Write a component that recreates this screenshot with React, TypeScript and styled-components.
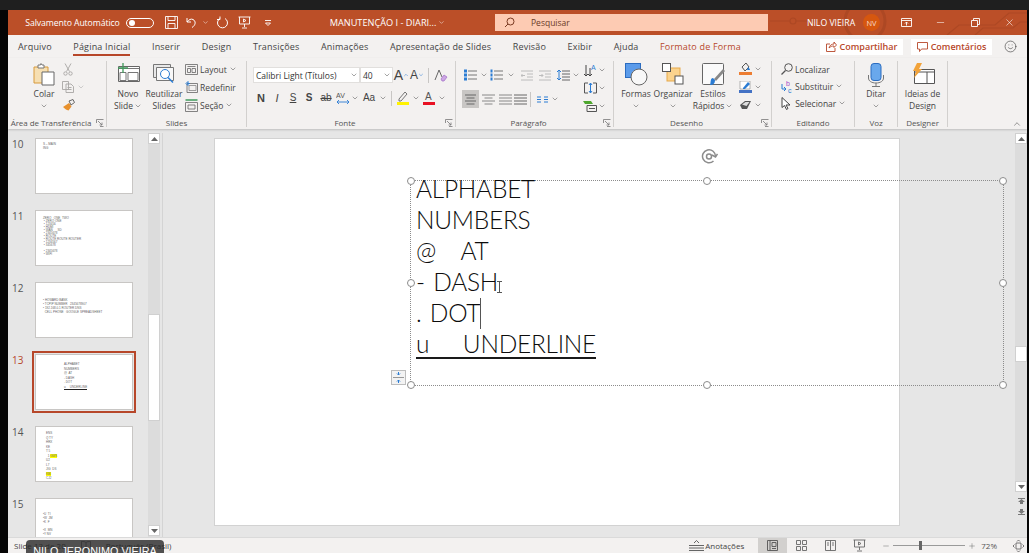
import React from 'react'
import styled, { createGlobalStyle } from 'styled-components'
import { ChevronDown, ChevronUp, Smile, Minus, X, Plus } from 'lucide-react'

const ACCENT = '#b7472a'
const UI_FONT = '"Open Sans", "Noto Sans", sans-serif'

const GlobalStyle = createGlobalStyle`
  html, body { margin: 0; padding: 0; background: #000; }
  * { box-sizing: border-box; }
  body { font-family: ${UI_FONT}; }
`

const Page = styled.div`
  position: relative;
  width: 1029px;
  height: 553px;
  overflow: hidden;
  background: #050505;
  display: flex;
  flex-direction: column;
`
const TopStrip = styled.div`
  height: 10px;
  flex: none;
  background: #1f1f1f;
`
const Win = styled.div`
  width: 1019px;
  margin-left: 8px;
  height: 543px;
  display: flex;
  flex-direction: column;
  background: #e6e6e6;
`

/* title bar */
const TitleBar = styled.div`
  position: relative;
  height: 25px;
  flex: none;
  background: #bb4f28;
  color: #fff;
  display: flex;
  align-items: center;
  overflow: hidden;
  font-size: 8.7px;
`
const Circuit = styled.svg`
  position: absolute;
  right: 0;
  top: 0;
`
const TitleSlot = styled.div<{ $w: number; $ml?: number; $fs?: number; $ls?: number }>`
  position: relative;
  width: ${p => p.$w}px;
  margin-left: ${p => p.$ml ?? 0}px;
  flex: none;
  display: flex;
  align-items: center;
  justify-content: center;
  white-space: nowrap;
  font-size: ${p => p.$fs ?? 8.7}px;
  letter-spacing: ${p => p.$ls ?? 0}px;
`
const Toggle = styled.div`
  width: 28px;
  height: 10px;
  border: 1px solid #fff;
  border-radius: 6px;
  display: flex;
  align-items: center;
  padding-left: 2px;
`
const ToggleKnob = styled.div`
  width: 6px;
  height: 6px;
  border-radius: 50%;
  background: #fff;
`
const SearchBox = styled.div`
  position: relative;
  width: 273px;
  height: 17px;
  margin-left: 50px;
  flex: none;
  background: #fdcbb3;
  color: #6b3a28;
  display: flex;
  align-items: center;
  gap: 16px;
  padding-left: 9px;
  font-size: 8.5px;
`
const Avatar = styled.div`
  width: 17px;
  height: 17px;
  border-radius: 50%;
  background: #d6570f;
  font-size: 7.5px;
  display: flex;
  align-items: center;
  justify-content: center;
  color: #f7d9c8;
`

/* tabs */
const TabRow = styled.div`
  height: 23px;
  flex: none;
  background: #f3f1f0;
  display: flex;
  align-items: center;
  padding-left: 10px;
  gap: 21.5px;
`
const Tab = styled.div<{ $active?: boolean; $accent?: boolean }>`
  position: relative;
  font-size: 9px;
  letter-spacing: 0.18px;
  color: ${p => (p.$accent ? ACCENT : '#444')};
  white-space: nowrap;
  ${p => p.$active && `
    &::after {
      content: '';
      position: absolute;
      left: 0;
      right: 0;
      bottom: -3px;
      height: 2px;
      background: ${ACCENT};
    }
  `}
`
const TabActions = styled.div`
  margin-left: auto;
  display: flex;
  align-items: center;
  gap: 8px;
  padding-right: 10px;
`
const ActionButton = styled.div<{ $w: number }>`
  width: ${p => p.$w}px;
  height: 16px;
  background: #fff;
  color: ${ACCENT};
  font-size: 9px;
  font-weight: 600;
  display: flex;
  align-items: center;
  justify-content: center;
  gap: 3px;
  white-space: nowrap;
`
const SmileSlot = styled.div`
  margin-left: 3px;
  width: 14px;
  height: 14px;
  display: flex;
  align-items: center;
  justify-content: center;
`

/* ribbon */
const Ribbon = styled.div`
  position: relative;
  height: 71px;
  flex: none;
  background: #f3f1f0;
  display: flex;
  padding-top: 3px;
  box-shadow: 0 1px 2px rgba(0, 0, 0, .18);
  z-index: 1;
`
const Group = styled.div<{ $w: number }>`
  position: relative;
  width: ${p => p.$w}px;
  height: 66px;
  flex: none;
  border-right: 1px solid #d2d0ce;
  display: flex;
  flex-direction: column;
`
const GroupBody = styled.div<{ $pl?: number; $gap?: number }>`
  height: 56px;
  flex: none;
  display: flex;
  padding-left: ${p => p.$pl ?? 0}px;
  gap: ${p => p.$gap ?? 0}px;
`
const GroupLabel = styled.div<{ $launcher?: boolean }>`
  height: 10px;
  font-size: 8px;
  line-height: 12px;
  text-align: center;
  color: #555;
  white-space: nowrap;
  letter-spacing: -0.05px;
  padding-right: ${p => (p.$launcher ? 12 : 0)}px;
`
const Launcher = styled.svg`
  position: absolute;
  right: 2px;
  bottom: 0;
`
const BigButton = styled.div<{ $w: number }>`
  width: ${p => p.$w}px;
  flex: none;
  display: flex;
  flex-direction: column;
  align-items: center;
  font-size: 8.5px;
  line-height: 12px;
  color: #444;
  white-space: nowrap;
`
const BigIcon = styled.div`
  height: 27px;
  display: flex;
  align-items: flex-start;
  justify-content: center;
  padding-top: 2px;
`
const TextLine = styled.div`
  display: flex;
  align-items: center;
  gap: 1px;
  height: 12px;
`
const SmallColumn = styled.div<{ $gap?: number; $ml?: number }>`
  display: flex;
  flex-direction: column;
  gap: ${p => p.$gap ?? 2}px;
  margin-left: ${p => p.$ml ?? 0}px;
`
const SmallRow = styled.div<{ $gap?: number }>`
  height: 16px;
  display: flex;
  align-items: center;
  gap: ${p => p.$gap ?? 2}px;
  font-size: 8.5px;
  color: #444;
  white-space: nowrap;
`
const Stack = styled.div`
  display: flex;
  flex-direction: column;
`
const ToolRow = styled.div<{ $mt?: number }>`
  display: flex;
  align-items: center;
  margin-top: ${p => p.$mt ?? 0}px;
`
const Slot = styled.div<{ $w: number; $h?: number; $on?: boolean }>`
  width: ${p => p.$w}px;
  height: ${p => p.$h ?? 18}px;
  flex: none;
  display: flex;
  align-items: center;
  justify-content: center;
  color: #444;
  background: ${p => (p.$on ? '#c8c6c4' : 'transparent')};
`
const VLine = styled.div<{ $mx?: number }>`
  width: 1px;
  height: 15px;
  flex: none;
  margin: 0 ${p => p.$mx ?? 3}px;
  background: #c8c6c4;
`
const ComboBox = styled.div<{ $w: number }>`
  width: ${p => p.$w}px;
  height: 16px;
  flex: none;
  background: #fff;
  border: 1px solid #e1dfdd;
  display: flex;
  align-items: center;
  justify-content: space-between;
  padding: 0 1px 0 2px;
  font-size: 8.5px;
  color: #333;
  white-space: nowrap;
  overflow: hidden;
`
const GlyphBtn = styled.span<{ $bold?: boolean; $italic?: boolean; $under?: boolean; $strike?: boolean; $size?: number }>`
  font-family: "Liberation Sans", sans-serif;
  font-size: ${p => p.$size ?? 10}px;
  font-weight: ${p => (p.$bold ? 700 : 400)};
  font-style: ${p => (p.$italic ? 'italic' : 'normal')};
  text-decoration: ${p => (p.$under ? 'underline' : p.$strike ? 'line-through' : 'none')};
  color: #444;
  line-height: 1;
`
const CollapseBtn = styled.div`
  position: absolute;
  right: 5px;
  bottom: 0;
  color: #555;
  display: flex;
`

/* editor area */
const Workspace = styled.div`
  flex: 1;
  min-height: 0;
  display: flex;
  padding-top: 4px;
  background: #e6e6e6;
`
const Panel = styled.div`
  width: 140px;
  flex: none;
  padding-top: 5px;
  overflow: hidden;
`
const ThumbRow = styled.div`
  height: 72px;
  display: flex;
  align-items: flex-start;
`
const ThumbNumber = styled.div<{ $on?: boolean }>`
  width: 27px;
  padding-left: 4px;
  font-size: 10px;
  line-height: 12px;
  color: ${p => (p.$on ? ACCENT : '#555')};
`
const Thumb = styled.div<{ $on?: boolean }>`
  width: 98px;
  height: 56px;
  flex: none;
  background: #fff;
  border: 1px solid #c8c6c4;
  overflow: hidden;
  font-family: "Liberation Sans", sans-serif;
  font-size: 3px;
  line-height: 3px;
  color: #666;
  white-space: pre;
  ${p => p.$on && `outline: 2px solid ${ACCENT}; outline-offset: 1px;`}
`
const ThumbText = styled.div<{ $pl: number; $pt: number; $lh?: number }>`
  padding: ${p => p.$pt}px 0 0 ${p => p.$pl}px;
  line-height: ${p => p.$lh ?? 3}px;
`
const Mark = styled.span`
  background: #ffff00;
`
const UnderMark = styled.span`
  border-bottom: 1px solid #222;
`
const ScrollTrack = styled.div<{ $w: number }>`
  width: ${p => p.$w}px;
  flex: none;
  background: #dcdcdc;
  display: flex;
  flex-direction: column;
  align-items: stretch;
`
const ScrollBtn = styled.div<{ $end?: boolean }>`
  height: 11px;
  flex: none;
  margin-top: ${p => (p.$end ? 'auto' : '0')};
  margin-bottom: ${p => (p.$end ? '1px' : '0')};
  background: #fff;
  border: 1px solid #d0d0d0;
  display: flex;
  align-items: center;
  justify-content: center;
`
const ScrollThumb = styled.div<{ $h: number; $mt: number }>`
  height: ${p => p.$h}px;
  margin-top: ${p => p.$mt}px;
  flex: none;
  background: #fff;
  border: 1px solid #d0d0d0;
`
const PanelEdge = styled.div`
  width: 2px;
  margin-left: 1px;
  flex: none;
  border-right: 1px solid #d4d4d4;
`
const Canvas = styled.div`
  flex: 1;
  padding: 5px 0 0 51px;
  min-width: 0;
`
const Slide = styled.div`
  position: relative;
  width: 686px;
  height: 388px;
  background: #fff;
  border: 1px solid #d2d2d2;
`
const TextFrame = styled.div`
  position: absolute;
  left: 195px;
  top: 41px;
  width: 594px;
  height: 206px;
  border: 1px dotted #8c8c8c;
  padding-left: 5px;
  font-family: Lato, sans-serif;
  font-weight: 300;
  font-size: 24.5px;
  line-height: 31px;
  letter-spacing: -0.25px;
  word-spacing: 2px;
  color: #0c0c0c;
  white-space: pre;
`
const SlideLine = styled.div<{ $first?: boolean }>`
  height: 31px;
  margin-top: ${p => (p.$first ? -8 : 0)}px;
`
const Caret = styled.span`
  display: inline-block;
  width: 1px;
  height: 31px;
  background: #555;
  vertical-align: -7px;
`
const Underlined = styled.span`
  border-bottom: 2px solid #1a1a1a;
  padding-bottom: 0;
  display: inline-block;
  line-height: 27px;
`
const Handle = styled.div<{ $x: number; $y: number }>`
  position: absolute;
  left: calc(${p => p.$x}% - 4px);
  top: calc(${p => p.$y}% - 4px);
  width: 8px;
  height: 8px;
  border-radius: 50%;
  background: #fff;
  border: 1.5px solid #8c8c8c;
`
const RotateHandle = styled.svg`
  position: absolute;
  left: 288px;
  top: -32px;
`
const FitOptions = styled.div`
  position: absolute;
  left: -20px;
  top: 189px;
  width: 15px;
  height: 15px;
  background: #f3f3f3;
  border: 1px solid #bdbdbd;
  display: flex;
`
const IBeam = styled.svg`
  position: absolute;
  left: 85px;
  top: 100px;
`
const RightScroll = styled.div`
  width: 12px;
  flex: none;
  display: flex;
  flex-direction: column;
`
const RightTrack = styled.div`
  height: 359px;
  background: #dcdcdc;
  display: flex;
  flex-direction: column;
  justify-content: space-between;
`
const PageJump = styled.div`
  flex: 1;
  display: flex;
  flex-direction: column;
  align-items: center;
  gap: 5px;
  padding-top: 5px;
`

/* status bar */
const StatusBar = styled.div`
  height: 16px;
  flex: none;
  background: #f3f1f0;
  border-top: 1px solid #dadada;
  display: flex;
  align-items: center;
  font-size: 8px;
  color: #444;
  white-space: nowrap;
`
const StatusLeft = styled.div`
  display: flex;
  align-items: center;
  padding-left: 6px;
  gap: 15px;
  flex: 1;
`
const NotesBtn = styled.div`
  display: flex;
  align-items: center;
  gap: 1px;
  margin-right: 14px;
`
const ViewBtn = styled.div<{ $on?: boolean }>`
  width: 29px;
  height: 15px;
  display: flex;
  align-items: center;
  justify-content: center;
  background: ${p => (p.$on ? '#d2d0ce' : 'transparent')};
`
const ZoomTrack = styled.div`
  position: relative;
  width: 72px;
  height: 1px;
  margin: 0 3px;
  background: #9a9a9a;
`
const ZoomKnob = styled.div`
  position: absolute;
  left: 26px;
  top: -4px;
  width: 3px;
  height: 9px;
  background: #666;
`
const ZoomArea = styled.div`
  display: flex;
  align-items: center;
  margin-left: 8px;
  padding-right: 3px;
  color: #555;
`
const ZoomValue = styled.span`
  margin: 0 16px 0 5px;
`
const NameTag = styled.div`
  position: absolute;
  left: 26px;
  top: 540px;
  width: 138px;
  height: 16px;
  background: rgba(40, 40, 40, .8);
  border-radius: 4px 4px 0 0;
  color: #fff;
  font-family: "Liberation Sans", sans-serif;
  font-size: 10.8px;
  line-height: 22px;
  text-align: center;
  white-space: nowrap;
  z-index: 3;
  overflow: hidden;
`

/* drawn icons */
const Chev = ({ c = '#555', s = 8 }: { c?: string; s?: number }) => <ChevronDown size={s} color={c} strokeWidth={1.6} />

const LauncherIcon = () => (
  <Launcher width="8" height="8" viewBox="0 0 8 8" fill="none" stroke="#777" strokeWidth=".8">
    <path d="M.5 4V.5H7.5M2 2l4 4M6 3.5V6H3.5M7.5 7.5H4" />
  </Launcher>
)
const SaveIcon = () => (
  <svg width="13" height="13" viewBox="0 0 13 13" fill="none" stroke="#fff" strokeWidth=".9">
    <path d="M.5.5h12v12H.5zM3 .5v4h7v-4M3 12.5V7.5h7v5" />
  </svg>
)
const UndoIcon = () => (
  <svg width="12" height="12" viewBox="0 0 12 12" fill="none" stroke="#fff" strokeWidth="1">
    <path d="M1 1v4h4M1 5c2-2.500 4-3.500 6-2.500 3 1.500 3 5.500-1 8" />
  </svg>
)
const RedoIcon = () => (
  <svg width="13" height="13" viewBox="0 0 13 13" fill="none" stroke="#fff" strokeWidth="1">
    <path d="M9 2.500a5 5 0 1 1-5 0M4 .5v3H1" />
  </svg>
)
const PresentIcon = ({ c = '#fff' }: { c?: string }) => (
  <svg width="13" height="13" viewBox="0 0 13 13" fill="none" stroke={c} strokeWidth=".9">
    <path d="M.5 1h12M1.500 1v7h10V1M6.500 8v3M4 12h5M5.500 3l2.500 1.500L5.500 6z" />
  </svg>
)
const QatIcon = () => (
  <svg width="8" height="8" viewBox="0 0 8 8" fill="none" stroke="#fff" strokeWidth=".9">
    <path d="M1 1.500h6M1.500 4h5L4 6.500z" />
  </svg>
)
const SearchGlyph = () => (
  <svg width="11" height="11" viewBox="0 0 11 11" fill="none" stroke="#7a3a22" strokeWidth="1">
    <circle cx="6.500" cy="4.500" r="3.500" />
    <path d="M4 7L1 10" />
  </svg>
)
const RibbonDisplayIcon = () => (
  <svg width="11" height="9" viewBox="0 0 11 9" fill="none" stroke="#fff" strokeWidth=".9">
    <path d="M.5.5h10v8H.5zM.5 2.500h10M5.500 7.500V4M4 5.500L5.500 4 7 5.500" />
  </svg>
)
const RestoreIcon = () => (
  <svg width="9" height="9" viewBox="0 0 9 9" fill="none" stroke="#fff" strokeWidth=".9">
    <path d="M.5 2.500h6v6h-6zM2.500 2.500v-2h6v6h-2" />
  </svg>
)
const ShareIcon = () => (
  <svg width="11" height="11" viewBox="0 0 11 11" fill="none" stroke={ACCENT} strokeWidth=".9">
    <path d="M4 3H.5v7.500h8.500V7M3 7c.5-2.500 2.500-4 5-4V1l2.500 3L8 6.500V5c-2 0-3.500.5-5 2z" />
  </svg>
)
const CommentIcon = () => (
  <svg width="11" height="10" viewBox="0 0 11 10" fill="none" stroke={ACCENT} strokeWidth=".9">
    <path d="M.5.5h10v6.500H4.500L2.500 9.500V7h-2z" />
  </svg>
)
const ColarIcon = () => (
  <svg width="22" height="23" viewBox="0 0 22 23" fill="none">
    <path d="M1 4h14v16H1z" fill="#f6dfb2" stroke="#d79a3d" />
    <path d="M5 4V2h2.500l.5-1.500L9 2h2v3H5z" fill="#fff" stroke="#777" />
    <path d="M9 9h12v13H9z" fill="#fff" stroke="#666" />
  </svg>
)
const ScissorsIcon = () => (
  <svg width="10" height="13" viewBox="0 0 10 13" fill="none" stroke="#a8a6a4" strokeWidth=".9">
    <path d="M2 .5l4.500 8M8 .5L3.500 8.500" />
    <circle cx="2.500" cy="10.500" r="1.700" />
    <circle cx="7.500" cy="10.500" r="1.700" />
  </svg>
)
const CopyIcon = () => (
  <svg width="13" height="12" viewBox="0 0 13 12" fill="none" stroke="#a8a6a4" strokeWidth=".9">
    <path d="M.5.5h6v8h-6zM4 3h5l2.500 2.500v6H4zM5.500 6.500h4M5.500 8.500h4" fill="#f3f1f0" />
  </svg>
)
const PainterIcon = () => (
  <svg width="13" height="12" viewBox="0 0 13 12">
    <path d="M7 2l4-1.500 1.500 3L9 6z" fill="none" stroke="#666" />
    <path d="M1 8l6-4 2.500 3.500-3 4c-2-.5-4-2-5.500-3.500z" fill="#e8912d" />
  </svg>
)
const NovoSlideIcon = () => (
  <svg width="23" height="20" viewBox="0 0 23 20" fill="none">
    <path d="M1.500 3.500h21v15h-21z" fill="#fff" stroke="#666" />
    <path d="M1.500 5.500h21M11 9.500h10v8H11zM3 9.500h6v8H3z" stroke="#777" />
    <path d="M6 0v10M1 5h10" stroke="#3f9a5b" strokeWidth="1.300" />
  </svg>
)
const ReuseIcon = () => (
  <svg width="23" height="21" viewBox="0 0 23 21" fill="none">
    <path d="M.5 1.500h17v13H.5z" fill="#e8e8e8" stroke="#777" />
    <path d="M3.500 4.500h17v13h-17z" fill="#f8f8f8" stroke="#777" />
    <circle cx="12" cy="11" r="4.500" stroke="#2b7cd3" fill="#fff" />
    <path d="M15 14.500l5 5" stroke="#2b7cd3" strokeWidth="1.500" />
  </svg>
)
const LayoutIcon = () => (
  <svg width="13" height="11" viewBox="0 0 13 11" fill="none" stroke="#666">
    <path d="M.5.5h12v10H.5zM2.500 2.500h8M2.500 4.500h3v4h-3zM7 4.500h3.500v4H7z" strokeWidth=".8" />
  </svg>
)
const ResetIcon = () => (
  <svg width="13" height="12" viewBox="0 0 13 12" fill="none">
    <path d="M2 2.500h10.500v9H2z" stroke="#666" strokeWidth=".8" />
    <path d="M4 4.500h7v5H4z" stroke="#888" strokeWidth=".8" />
    <path d="M1 2.500L3 .5v4zM3 2.500h2" stroke="#2b7cd3" />
  </svg>
)
const SectionIcon = () => (
  <svg width="13" height="13" viewBox="0 0 13 13" fill="none">
    <path d="M.5 1h12" stroke="#3f9a5b" strokeWidth="1.500" />
    <path d="M.5 3.500h12v9H.5zM3 6h7v4H3z" stroke="#666" strokeWidth=".8" />
  </svg>
)
const ClearFormatIcon = () => (
  <svg width="14" height="13" viewBox="0 0 14 13" fill="none">
    <path d="M1 11L5 1l3 7" stroke="#666" />
    <path d="M7 10l3-4 3 2-3 4H8z" fill="#cda7e4" stroke="#a06cc7" strokeWidth=".7" />
  </svg>
)
const SpacingIcon = () => (
  <svg width="14" height="13" viewBox="0 0 14 13">
    <text x="0" y="6" fontFamily="Liberation Sans" fontSize="7" fill="#555">AV</text>
    <path d="M1 10h12M1 10l2-2M1 10l2 2M13 10l-2-2M13 10l-2 2" stroke="#2b7cd3" fill="none" strokeWidth=".9" />
  </svg>
)
const HighlightIcon = () => (
  <svg width="12" height="14" viewBox="0 0 12 14">
    <path d="M2 8L8 1l2 2-6 7H2z" fill="none" stroke="#666" strokeWidth=".9" />
    <rect x="0" y="11" width="12" height="3" fill="#fff200" />
  </svg>
)
const FontColorIcon = () => (
  <svg width="12" height="14" viewBox="0 0 12 14">
    <text x="2" y="9" fontFamily="Liberation Sans" fontSize="10" fill="#555">A</text>
    <rect x="0" y="11" width="12" height="3" fill="#e81123" />
  </svg>
)
const Lines = ({ widths, c = '#888', w = 13 }: { widths: number[]; c?: string; w?: number }) => (
  <svg width={w} height="11" viewBox={`0 0 ${w} 11`} stroke={c} strokeWidth="1">
    {widths.map((v, i) => {
      const x = (w - v) / 2
      return <path key={i} d={`M${x} ${1 + i * 3}h${v}`} />
    })}
  </svg>
)
const BulletsIcon = ({ num }: { num?: boolean }) => (
  <svg width="13" height="12" viewBox="0 0 13 12" stroke="#777" strokeWidth="1">
    <path d="M4 2h9M4 6h9M4 10h9" />
    {[2, 6, 10].map(y => (num
      ? <rect key={y} x="0.500" y={y - 1.5} width="2" height="3" fill="#2b7cd3" stroke="none" />
      : <rect key={y} x="0" y={y - 1.5} width="3" height="3" fill="#2b7cd3" stroke="none" />))}
  </svg>
)
const IndentIcon = ({ flip }: { flip?: boolean }) => (
  <svg width="12" height="11" viewBox="0 0 12 11" stroke="#bcbcbc" strokeWidth="1" fill="none">
    <path d="M0 1h12M0 10h12M6 4h6M6 7h6" />
    <path d={flip ? 'M0 5.500h4M2.500 4L4 5.500 2.500 7' : 'M0 5.500h4M1.500 4L0 5.500 1.500 7'} />
  </svg>
)
const LineSpacingIcon = () => (
  <svg width="13" height="12" viewBox="0 0 13 12" fill="none">
    <path d="M2 1v10M0 3l2-2 2 2M0 9l2 2 2-2" stroke="#2b7cd3" />
    <path d="M5 2h8M5 5h8M5 8h8M5 11h8" stroke="#666" />
  </svg>
)
const ColumnsIcon = () => (
  <svg width="11" height="7" viewBox="0 0 11 7" stroke="#2b7cd3">
    <path d="M0 1h4M0 3.500h4M0 6h4M7 1h4M7 3.500h4M7 6h4" />
  </svg>
)
const TextDirIcon = () => (
  <svg width="14" height="13" viewBox="0 0 14 13" fill="none">
    <path d="M3 1v11M1 10l2 2 2-2M7 4v8M5 10l2 2 2-2" stroke="#444" />
    <text x="8" y="6" fontSize="7" fontFamily="Liberation Sans" fill="#2b7cd3">A</text>
  </svg>
)
const AlignTextIcon = () => (
  <svg width="13" height="12" viewBox="0 0 13 12" fill="none">
    <path d="M4 1H.5v10H4M9 1h3.500v10H9" stroke="#555" />
    <path d="M6.500 1v10M5 3l1.500-2L8 3M5 9l1.500 2L8 9" stroke="#2b7cd3" />
  </svg>
)
const SmartArtIcon = () => (
  <svg width="14" height="12" viewBox="0 0 14 12" fill="none">
    <path d="M0 1h8l2 3H2z" fill="#4ea72e" />
    <path d="M4 5.500h9.500v6H4zM6 8.500h6" stroke="#555" />
  </svg>
)
const ShapesIcon = () => (
  <svg width="23" height="23" viewBox="0 0 23 23">
    <rect x="0.500" y="0.500" width="15" height="14" fill="#5b9bea" stroke="#2b6cc0" />
    <circle cx="14" cy="14" r="8" fill="#f8f8f8" stroke="#666" />
  </svg>
)
const ArrangeIcon = () => (
  <svg width="22" height="22" viewBox="0 0 22 22">
    <rect x="5" y="5" width="13" height="13" fill="#fbd38d" stroke="#e7a94a" />
    <rect x="0.500" y="0.500" width="8" height="8" fill="#fff" stroke="#555" />
    <rect x="13" y="13" width="8" height="8" fill="#fff" stroke="#555" />
  </svg>
)
const QuickStyleIcon = () => (
  <svg width="23" height="23" viewBox="0 0 23 23">
    <rect x="0.500" y="0.500" width="21" height="21" rx="1" fill="#fafafa" stroke="#666" />
    <path d="M21 6L12 16l2 2 9-10z" fill="#888" />
    <path d="M8 22c3 0 5-1 5-5l-2-2c-3 0-2 5-3 7z" fill="#2b7cd3" />
  </svg>
)
const FillIcon = () => (
  <svg width="13" height="12" viewBox="0 0 13 12">
    <path d="M3 4l4-4 3 4-4 4z" fill="none" stroke="#555" />
    <path d="M9 4c1 1 2 2 2 3H8z" fill="#2b7cd3" />
    <rect x="0" y="9" width="13" height="3" fill="#ed7d31" />
  </svg>
)
const OutlineIcon = () => (
  <svg width="13" height="12" viewBox="0 0 13 12">
    <path d="M1 0h10v8H1z" fill="#fff" stroke="#888" strokeWidth=".6" />
    <path d="M4 7l5-6 2 2-5 5H4z" fill="#2b7cd3" />
    <rect x="0" y="9" width="13" height="3" fill="#4472c4" />
  </svg>
)
const EffectIcon = () => (
  <svg width="13" height="10" viewBox="0 0 13 10">
    <path d="M1 5l5-4h6L8 9H3z" fill="#555" />
    <path d="M3 4.500l3.500-2.500h4L7.500 6z" fill="#ddd" />
  </svg>
)
const FindIcon = () => (
  <svg width="12" height="12" viewBox="0 0 12 12" fill="none" stroke="#555">
    <circle cx="7.500" cy="4.500" r="3.800" />
    <path d="M4.500 7.500L.5 11.500" strokeWidth="1.200" />
  </svg>
)
const ReplaceIcon = () => (
  <svg width="12" height="13" viewBox="0 0 12 13" fill="none">
    <text x="5" y="6" fontSize="7" fontFamily="Liberation Sans" fill="#a64ac9">b</text>
    <text x="7" y="13" fontSize="7" fontFamily="Liberation Sans" fill="#2b7cd3">c</text>
    <path d="M1 4v5h4M3 7l2 2-2 2" stroke="#2b7cd3" />
  </svg>
)
const SelectIcon = () => (
  <svg width="10" height="13" viewBox="0 0 10 13" fill="#fff" stroke="#444">
    <path d="M1 .5v10l2.500-2 2 4 1.500-1-2-3.500H9z" />
  </svg>
)
const DictateIcon = () => (
  <svg width="16" height="24" viewBox="0 0 16 24" fill="none">
    <rect x="3" y="0.500" width="10" height="17" rx="3" fill="#69a8ec" stroke="#2b6cc0" />
    <path d="M.5 12v3c0 3 3 5 7.500 5s7.500-2 7.500-5v-3M8 20v3M4 23.500h8" stroke="#777" />
  </svg>
)
const DesignerIcon = () => (
  <svg width="24" height="23" viewBox="0 0 24 23" fill="none">
    <path d="M3.500 6.500h20v14h-20z" fill="#fff" stroke="#555" />
    <path d="M3.500 9h20M16 9v11.500" stroke="#555" />
    <path d="M6 0h5L8 6h3L3 15l2-7H2z" fill="#f2a33a" />
  </svg>
)
const BookIcon = () => (
  <svg width="10" height="9" viewBox="0 0 10 9" fill="none" stroke="#666" strokeWidth=".8">
    <path d="M5 1.500C4 .5 2 .5.500.5v7c1.500 0 3.500 0 4.500 1 1-1 3-1 4.500-1v-7C8 .5 6 .5 5 1.500zM5 1.500v7" />
  </svg>
)
const NotesIcon = () => (
  <svg width="15" height="11" viewBox="0 0 15 11" fill="none" stroke="#555" strokeWidth=".9">
    <path d="M5 3l2.500-2.500L10 3M0 5.500h15M0 8h15M0 10.500h15" />
  </svg>
)
const NormalViewIcon = () => (
  <svg width="11" height="11" viewBox="0 0 11 11" fill="none" stroke="#555">
    <path d="M.5.5h10v10H.5zM3 .5v10M5 2.500h4v4H5zM5 8.500h4" strokeWidth=".9" />
  </svg>
)
const SorterIcon = () => (
  <svg width="11" height="11" viewBox="0 0 11 11" fill="none" stroke="#666" strokeWidth=".9">
    <path d="M.5.5h4v4h-4zM6.500.5h4v4h-4zM.5 6.500h4v4h-4zM6.500 6.500h4v4h-4z" />
  </svg>
)
const ReadingIcon = () => (
  <svg width="11" height="11" viewBox="0 0 11 11" fill="none" stroke="#666" strokeWidth=".9">
    <path d="M.5.5h10v10H.5zM5.500.5v10M2 3h2M2 5h2M7 3h2M7 5h2" />
  </svg>
)
const FitIcon = () => (
  <svg width="11" height="12" viewBox="0 0 11 12" fill="none" stroke="#555" strokeWidth=".8">
    <path d="M3 3h5v6H3zM4 1.500L5.500 0 7 1.500M4 10.500L5.500 12 7 10.500M1.500 4.500L0 6l1.500 1.500M9.500 4.500L11 6 9.500 7.500" />
  </svg>
)
const UpTri = () => (
  <svg width="7" height="4" viewBox="0 0 7 4" fill="#666"><path d="M3.500 0L7 4H0z" /></svg>
)
const DownTri = () => (
  <svg width="7" height="4" viewBox="0 0 7 4" fill="#666"><path d="M0 0h7L3.500 4z" /></svg>
)
const PageUpIcon = () => (
  <svg width="7" height="7" viewBox="0 0 7 7" fill="#777"><path d="M0 1h7v1H0zM3.500 2L7 5H5v2H2V5H0z" /></svg>
)
const PageDownIcon = () => (
  <svg width="7" height="7" viewBox="0 0 7 7" fill="#777"><path d="M0 5h7v1H0zM3.500 5L0 2h2V0h3v2h2z" /></svg>
)

const thumbs = [
  { n: 10, body: <ThumbText $pl={7} $pt={3} $lh={4}>{'S – MAIN\nING'}</ThumbText> },
  {
    n: 11,
    body: <ThumbText $pl={7} $pt={6} $lh={3}>{'ZERO   ONE  TWO\n • ZERO ONE\n • 123456\n • HDMI\n • WAN      SD\n • 2345678\n • ROUTE\n • ROUTE ROUTE ROUTER\n • 1234567\n • 345678\n\n • 2345678\n • WIFI'}</ThumbText>,
  },
  {
    n: 12,
    body: <ThumbText $pl={7} $pt={15} $lh={4}>{'• HOWARD BANK\n• TCPIP NUMBER   2345678907\n• 192.168.0.1 ROUTER DNS\n  CELL PHONE   GOOGLE SPREADSHEET'}</ThumbText>,
  },
  {
    n: 13,
    on: true,
    body: <ThumbText $pl={28} $pt={7} $lh={4.5}>{'ALPHABET\nNUMBERS\n@  AT\n- DASH\n. DOT\n'}<UnderMark>{'u     UNDERLINE'}</UnderMark></ThumbText>,
  },
  {
    n: 14,
    body: <ThumbText $pl={10} $pt={4} $lh={4.5}>{'ENS\nQ TY\nHRX\nKE\nT 5\n  1 '}<Mark>{'GWS'}</Mark>{'\nU2\nL7\nJIG  DS\n'}<Mark>{'KBI'}</Mark>{'\nCJ2'}</ThumbText>,
  },
  { n: 15, body: <ThumbText $pl={7} $pt={13} $lh={4}>{'•U  TI\n•W  JM\n•K  F\n\n•X  MN\n•Y NV'}</ThumbText> },
]

const App = () => (
  <Page>
    <GlobalStyle />
    <TopStrip />
    <Win>
      <TitleBar>
        <Circuit width="257" height="25" viewBox="0 0 257 25" fill="none" stroke="#ad4824" strokeWidth="1.200">
          <path d="M0 11h20M26 11h34M177 25l12-10h36l14-12h18M205 25l8-7h30l7-6h7" />
          <circle cx="23" cy="11" r="3" />
          <circle cx="95" cy="11" r="20" strokeWidth="3" />
        </Circuit>
        <TitleSlot $w={97} $ml={16} $ls={-0.1}>Salvamento Automático</TitleSlot>
        <TitleSlot $w={28} $ml={5}><Toggle><ToggleKnob /></Toggle></TitleSlot>
        <TitleSlot $w={13} $ml={11}><SaveIcon /></TitleSlot>
        <TitleSlot $w={12} $ml={8}><UndoIcon /></TitleSlot>
        <TitleSlot $w={8} $ml={3}><Chev c="#fff" s={7} /></TitleSlot>
        <TitleSlot $w={13} $ml={7}><RedoIcon /></TitleSlot>
        <TitleSlot $w={13} $ml={9}><PresentIcon /></TitleSlot>
        <TitleSlot $w={8} $ml={13}><QatIcon /></TitleSlot>
        <TitleSlot $w={102} $ml={60} $fs={9.2}>MANUTENÇÃO I - DIARI...</TitleSlot>
        <TitleSlot $w={8} $ml={3}><Chev c="#fff" s={7} /></TitleSlot>
        <SearchBox><SearchGlyph />Pesquisar</SearchBox>
        <TitleSlot $w={48} $ml={39}>NILO VIEIRA</TitleSlot>
        <TitleSlot $w={17} $ml={8}><Avatar>NV</Avatar></TitleSlot>
        <TitleSlot $w={11} $ml={21}><RibbonDisplayIcon /></TitleSlot>
        <TitleSlot $w={11} $ml={23}><Minus size={11} color="#fff" strokeWidth={1.2} /></TitleSlot>
        <TitleSlot $w={9} $ml={25}><RestoreIcon /></TitleSlot>
        <TitleSlot $w={11} $ml={24}><X size={11} color="#fff" strokeWidth={1.2} /></TitleSlot>
      </TitleBar>

      <TabRow>
        <Tab>Arquivo</Tab>
        <Tab $active>Página Inicial</Tab>
        <Tab>Inserir</Tab>
        <Tab>Design</Tab>
        <Tab>Transições</Tab>
        <Tab>Animações</Tab>
        <Tab>Apresentação de Slides</Tab>
        <Tab>Revisão</Tab>
        <Tab>Exibir</Tab>
        <Tab>Ajuda</Tab>
        <Tab $accent>Formato de Forma</Tab>
        <TabActions>
          <ActionButton $w={83}><ShareIcon />Compartilhar</ActionButton>
          <ActionButton $w={81}><CommentIcon />Comentários</ActionButton>
          <SmileSlot><Smile size={13} strokeWidth={1.2} color="#444" /></SmileSlot>
        </TabActions>
      </TabRow>

      <Ribbon>
        <Group $w={99}>
          <GroupBody $pl={19}>
            <BigButton $w={34}>
              <BigIcon><ColarIcon /></BigIcon>
              <TextLine>Colar</TextLine>
              <TextLine><Chev /></TextLine>
            </BigButton>
            <SmallColumn>
              <SmallRow><Slot $w={14} $h={16}><ScissorsIcon /></Slot></SmallRow>
              <SmallRow><Slot $w={14} $h={16}><CopyIcon /></Slot><Chev c="#aaa" /></SmallRow>
              <SmallRow><Slot $w={14} $h={16}><PainterIcon /></Slot></SmallRow>
            </SmallColumn>
          </GroupBody>
          <GroupLabel $launcher>Área de Transferência</GroupLabel>
          <LauncherIcon />
        </Group>

        <Group $w={140}>
          <GroupBody $pl={6} $gap={2}>
            <BigButton $w={30}>
              <BigIcon><NovoSlideIcon /></BigIcon>
              <TextLine>Novo</TextLine>
              <TextLine>Slide <Chev /></TextLine>
            </BigButton>
            <BigButton $w={38}>
              <BigIcon><ReuseIcon /></BigIcon>
              <TextLine>Reutilizar</TextLine>
              <TextLine>Slides</TextLine>
            </BigButton>
            <SmallColumn>
              <SmallRow><LayoutIcon />Layout <Chev /></SmallRow>
              <SmallRow><ResetIcon />Redefinir</SmallRow>
              <SmallRow><SectionIcon />Seção <Chev /></SmallRow>
            </SmallColumn>
          </GroupBody>
          <GroupLabel>Slides</GroupLabel>
        </Group>

        <Group $w={209}>
          <GroupBody $pl={6}>
            <Stack>
              <ToolRow $mt={6}>
                <ComboBox $w={107}>Calibri Light (Títulos)<Chev /></ComboBox>
                <ComboBox $w={33}>40<Chev /></ComboBox>
                <Slot $w={17} $h={16}><GlyphBtn $size={14}>A</GlyphBtn><ChevronUp size={6} color="#2b7cd3" /></Slot>
                <Slot $w={14} $h={16}><GlyphBtn $size={12}>A</GlyphBtn><ChevronDown size={6} color="#2b7cd3" /></Slot>
                <VLine $mx={4} />
                <Slot $w={16} $h={16}><ClearFormatIcon /></Slot>
              </ToolRow>
              <ToolRow $mt={6}>
                <Slot $w={16}><GlyphBtn $bold $size={11}>N</GlyphBtn></Slot>
                <Slot $w={16}><GlyphBtn $italic $size={11}>I</GlyphBtn></Slot>
                <Slot $w={16}><GlyphBtn $under $size={10}>S</GlyphBtn></Slot>
                <Slot $w={16}><GlyphBtn $bold $size={10}>S</GlyphBtn></Slot>
                <Slot $w={18}><GlyphBtn $strike $size={10}>ab</GlyphBtn></Slot>
                <Slot $w={16}><SpacingIcon /></Slot>
                <Slot $w={8}><Chev /></Slot>
                <Slot $w={20}><GlyphBtn $size={10}>Aa</GlyphBtn></Slot>
                <Slot $w={8}><Chev /></Slot>
                <VLine $mx={4} />
                <Slot $w={14}><HighlightIcon /></Slot>
                <Slot $w={12}><Chev /></Slot>
                <Slot $w={14}><FontColorIcon /></Slot>
                <Slot $w={12}><Chev /></Slot>
              </ToolRow>
            </Stack>
          </GroupBody>
          <GroupLabel $launcher>Fonte</GroupLabel>
          <LauncherIcon />
        </Group>

        <Group $w={158}>
          <GroupBody $pl={6}>
            <Stack>
              <ToolRow $mt={5}>
                <Slot $w={17}><BulletsIcon /></Slot>
                <Slot $w={9}><Chev /></Slot>
                <Slot $w={16}><BulletsIcon num /></Slot>
                <Slot $w={14}><Chev /></Slot>
                <Slot $w={17}><IndentIcon /></Slot>
                <Slot $w={20}><IndentIcon flip /></Slot>
                <Slot $w={16}><LineSpacingIcon /></Slot>
                <Slot $w={9}><Chev /></Slot>
              </ToolRow>
              <ToolRow $mt={6}>
                <Slot $w={17} $on><Lines widths={[11, 8, 11, 8]} c="#666" /></Slot>
                <Slot $w={18}><Lines widths={[13, 8, 13, 8]} /></Slot>
                <Slot $w={16}><Lines widths={[13, 13, 13, 13]} /></Slot>
                <Slot $w={14}><Lines widths={[13, 13, 13, 13]} c="#666" /></Slot>
                <VLine $mx={3} />
                <Slot $w={16}><ColumnsIcon /></Slot>
                <Slot $w={9}><Chev /></Slot>
              </ToolRow>
            </Stack>
            <SmallColumn $ml={2}>
              <ToolRow $mt={1}>
                <Slot $w={16} $h={16}><TextDirIcon /></Slot><Slot $w={8} $h={16}><Chev /></Slot>
              </ToolRow>
              <ToolRow>
                <Slot $w={16} $h={16}><AlignTextIcon /></Slot><Slot $w={8} $h={16}><Chev /></Slot>
              </ToolRow>
              <ToolRow>
                <Slot $w={16} $h={16}><SmartArtIcon /></Slot><Slot $w={8} $h={16}><Chev /></Slot>
              </ToolRow>
            </SmallColumn>
          </GroupBody>
          <GroupLabel $launcher>Parágrafo</GroupLabel>
          <LauncherIcon />
        </Group>

        <Group $w={158}>
          <GroupBody $pl={6}>
            <BigButton $w={32}>
              <BigIcon><ShapesIcon /></BigIcon>
              <TextLine>Formas</TextLine>
              <TextLine><Chev /></TextLine>
            </BigButton>
            <BigButton $w={42}>
              <BigIcon><ArrangeIcon /></BigIcon>
              <TextLine>Organizar</TextLine>
              <TextLine><Chev /></TextLine>
            </BigButton>
            <BigButton $w={38}>
              <BigIcon><QuickStyleIcon /></BigIcon>
              <TextLine>Estilos</TextLine>
              <TextLine>Rápidos <Chev /></TextLine>
            </BigButton>
            <SmallColumn $ml={6}>
              <SmallRow><Slot $w={14} $h={16}><FillIcon /></Slot><Chev /></SmallRow>
              <SmallRow><Slot $w={14} $h={16}><OutlineIcon /></Slot><Chev /></SmallRow>
              <SmallRow><Slot $w={14} $h={16}><EffectIcon /></Slot><Chev /></SmallRow>
            </SmallColumn>
          </GroupBody>
          <GroupLabel $launcher>Desenho</GroupLabel>
          <LauncherIcon />
        </Group>

        <Group $w={83}>
          <GroupBody $pl={9}>
            <SmallColumn $gap={1}>
              <SmallRow><FindIcon />Localizar</SmallRow>
              <SmallRow><ReplaceIcon />Substituir <Chev /></SmallRow>
              <SmallRow><SelectIcon />&nbsp;Selecionar <Chev /></SmallRow>
            </SmallColumn>
          </GroupBody>
          <GroupLabel>Editando</GroupLabel>
        </Group>

        <Group $w={43}>
          <GroupBody>
            <BigButton $w={42}>
              <BigIcon><DictateIcon /></BigIcon>
              <TextLine>Ditar</TextLine>
              <TextLine><Chev /></TextLine>
            </BigButton>
          </GroupBody>
          <GroupLabel>Voz</GroupLabel>
        </Group>

        <Group $w={50}>
          <GroupBody>
            <BigButton $w={49}>
              <BigIcon><DesignerIcon /></BigIcon>
              <TextLine>Ideias de</TextLine>
              <TextLine>Design</TextLine>
            </BigButton>
          </GroupBody>
          <GroupLabel>Designer</GroupLabel>
        </Group>
        <CollapseBtn><ChevronUp size={10} strokeWidth={1.4} /></CollapseBtn>
      </Ribbon>

      <Workspace>
        <Panel>
          {thumbs.map(t => (
            <ThumbRow key={t.n}>
              <ThumbNumber $on={t.on}>{t.n}</ThumbNumber>
              <Thumb $on={t.on}>{t.body}</Thumb>
            </ThumbRow>
          ))}
        </Panel>
        <ScrollTrack $w={12}>
          <ScrollBtn><UpTri /></ScrollBtn>
          <ScrollThumb $h={107} $mt={170} />
          <ScrollBtn $end><DownTri /></ScrollBtn>
        </ScrollTrack>
        <PanelEdge />
        <Canvas>
          <Slide>
            <TextFrame>
              <SlideLine $first>ALPHABET</SlideLine>
              <SlideLine>NUMBERS</SlideLine>
              <SlideLine>{'@   AT'}</SlideLine>
              <SlideLine>- DASH</SlideLine>
              <SlideLine>. DOT<Caret /></SlideLine>
              <SlideLine><Underlined>{'u    UNDERLINE'}</Underlined></SlideLine>
              <IBeam width="7" height="12" viewBox="0 0 7 12" fill="none" stroke="#555">
                <path d="M1 .5h5M3.500.5v11M1 11.500h5" />
              </IBeam>
              <Handle $x={0} $y={0} />
              <Handle $x={50} $y={0} />
              <Handle $x={100} $y={0} />
              <Handle $x={0} $y={50} />
              <Handle $x={100} $y={50} />
              <Handle $x={0} $y={100} />
              <Handle $x={50} $y={100} />
              <Handle $x={100} $y={100} />
              <RotateHandle width="19" height="16" viewBox="0 0 19 16" fill="none" stroke="#8c8c8c" strokeWidth="1.500">
                <path d="M14.500 12a6.500 6.500 0 1 1 2-4.500" />
                <path d="M13 6l3.500 2 2-3" />
                <circle cx="10" cy="7.500" r="2.500" />
              </RotateHandle>
              <FitOptions>
                <svg width="13" height="13" viewBox="0 0 13 13" fill="none">
                  <path d="M1 6.500h11" stroke="#999" />
                  <path d="M6.500 1v3M5 2.500L6.500 4 8 2.500M6.500 12V9M5 10.500L6.500 9 8 10.500" stroke="#2b7cd3" />
                </svg>
              </FitOptions>
            </TextFrame>
          </Slide>
        </Canvas>
        <RightScroll>
          <RightTrack>
            <Stack>
              <ScrollBtn><UpTri /></ScrollBtn>
              <ScrollThumb $h={16} $mt={202} />
            </Stack>
            <ScrollBtn><DownTri /></ScrollBtn>
          </RightTrack>
          <PageJump>
            <PageUpIcon />
            <PageDownIcon />
          </PageJump>
        </RightScroll>
      </Workspace>

      <StatusBar>
        <StatusLeft>
          <span>Slide 13 de 20</span>
          <BookIcon />
          <span>Português (Brasil)</span>
        </StatusLeft>
        <NotesBtn><NotesIcon />Anotações</NotesBtn>
        <ViewBtn $on><NormalViewIcon /></ViewBtn>
        <ViewBtn><SorterIcon /></ViewBtn>
        <ViewBtn><ReadingIcon /></ViewBtn>
        <ViewBtn><PresentIcon c="#666" /></ViewBtn>
        <ZoomArea>
          <Minus size={8} strokeWidth={1.3} />
          <ZoomTrack><ZoomKnob /></ZoomTrack>
          <Plus size={8} strokeWidth={1.3} />
          <ZoomValue>72%</ZoomValue>
          <FitIcon />
        </ZoomArea>
      </StatusBar>
    </Win>
    <NameTag>NILO JERONIMO VIEIRA</NameTag>
  </Page>
)

export default App
